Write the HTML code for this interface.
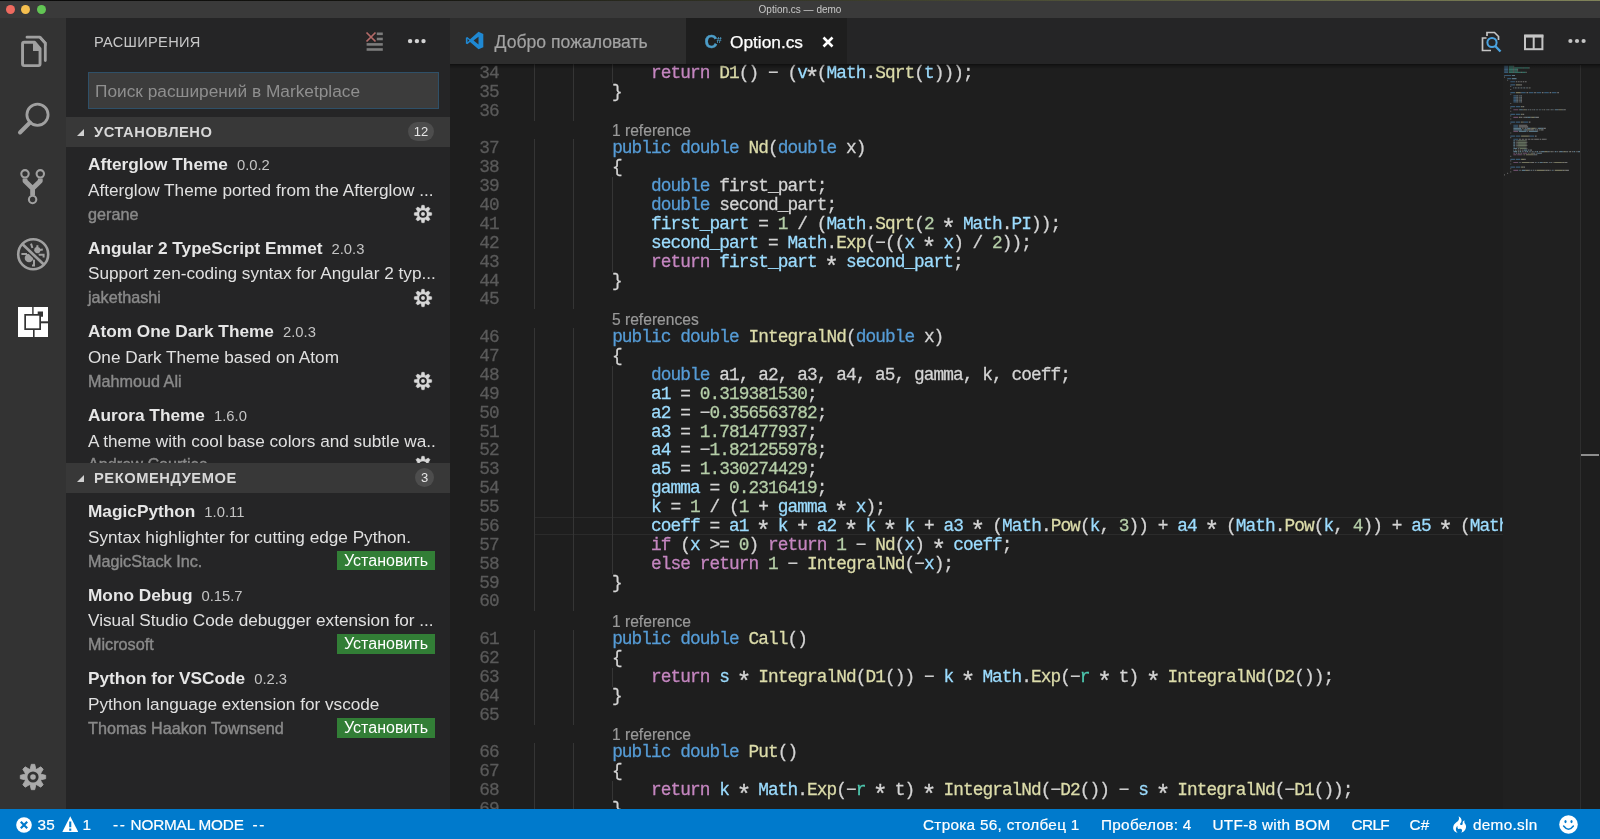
<!DOCTYPE html>
<html><head><meta charset="utf-8"><title>Option.cs — demo</title>
<style>
*{box-sizing:border-box;margin:0;padding:0}
html{background:#1e1e1e;overflow:hidden;width:1600px;height:839px}body{position:relative;will-change:transform;width:1600px;height:839px;overflow:hidden;background:#1e1e1e;font-family:"Liberation Sans",sans-serif;color:#ccc}
.abs{position:absolute}
#title{left:0;top:0;width:1600px;height:18px;background:#3a3a3a}
#title .edge{left:0;top:0;width:1600px;height:1.4px;background:linear-gradient(90deg,#0a0a0a 0,#151510 25%,#3d3f2c 55%,#6a6d4a 85%,#80835a 100%)}
#title .t{left:0;width:1600px;top:3.5px;text-align:center;font-size:10px;color:#c8c8c8;line-height:12px}
.tl{width:9.4px;height:9.4px;border-radius:50%;top:4.7px}
#act{left:0;top:18px;width:66px;height:791px;background:#333333}
#side{left:66px;top:18px;width:384px;height:791px;background:#252526;overflow:hidden}
#tabs{left:450px;top:18px;width:1150px;height:46px;background:#252526}
#editor{left:450px;top:64px;width:1150px;height:745px;background:#1e1e1e;overflow:hidden}
#status{left:0;top:809px;width:1600px;height:30px;background:#007acc;color:#fff;font-size:15.3px;line-height:30px;letter-spacing:.3px;-webkit-text-stroke:.2px}
#status span{position:absolute;top:1px;white-space:pre}
/* sidebar */
.hdr{left:0;width:384px;height:29.5px;background:#383838}
.hdr .lbl{left:28px;top:1.2px;line-height:29px;font-weight:bold;font-size:14.7px;color:#d8d8d8;letter-spacing:.55px}
.hdr .tri{left:10.6px;top:11.6px;width:0;height:0;border-left:7px solid transparent;border-bottom:7px solid #d0d0d0}
.badge{height:19px;border-radius:10px;background:#4d4d4d;color:#e6e6e6;font-size:13px;line-height:19px;text-align:center;top:5px}
.it{left:0;width:384px;height:84px}
.it .n{left:22px;top:4px;font-weight:bold;font-size:17.25px;color:#e6e6e6;line-height:24px;white-space:pre}
.it .n i{font-style:normal;font-weight:normal;font-size:14.8px;color:#c4c4c4;margin-left:9px}
.it .d{left:22px;top:29.9px;width:348px;overflow:hidden;font-size:17.2px;color:#e0e0e0;line-height:24px;white-space:pre}
.it .a{left:22px;top:54.6px;font-size:16.2px;color:#8a8a8a;line-height:22px;white-space:pre;-webkit-text-stroke:.4px}
.btn{left:271px;top:55.8px;width:98px;height:19.6px;background:#327e36;color:#fff;font-size:16px;line-height:19.6px;text-align:center}
/* code */
.ln{left:0;width:48.7px;text-align:right;color:#5a5a5a}
.code,.ln{font-family:"Liberation Mono",monospace;font-size:17.8px;letter-spacing:-0.930px;line-height:18.875px;height:18.875px;white-space:pre;position:absolute;-webkit-text-stroke:0.28px}
.code{left:84.2px;color:#d4d4d4}
.lens{position:absolute;left:162px;font-size:15.6px;color:#999;-webkit-text-stroke:0.2px;line-height:18.875px;white-space:pre}
.k{color:#569cd6}.c{color:#c586c0}.f{color:#dcdcaa}.v{color:#9cdcfe}.n{color:#b5cea8}.g{color:#4ec9b0}
.gd{position:absolute;width:1.5px;background:#353535}
.s{display:inline-block;width:9.752px;letter-spacing:0;font-size:25px;line-height:0;text-align:center;position:relative;top:8.1px;text-indent:-2.4px}
</style></head><body>
<div id="title" class="abs">
 <div class="abs edge"></div>
 <div class="abs tl" style="left:5.6px;background:#ee6a5f"></div>
 <div class="abs tl" style="left:21px;background:#f5bf4f"></div>
 <div class="abs tl" style="left:36.6px;background:#62c554"></div>
 <div class="abs t">Option.cs — demo</div>
</div>
<div id="act" class="abs">
<svg class="abs" style="left:0;top:0" width="66" height="791" viewBox="0 18 66 791" fill="none" stroke="#a0a0a0">
 <!-- files -->
 <path d="M27 37.2 H40 L45.3 43.2 V60.6" stroke-width="2.8" stroke-linejoin="round" stroke-linecap="round"/>
 <path d="M41 36.5 L46.5 42.5 V46 L39.5 38.5 Z" fill="#a0a0a0" stroke="none"/>
 <path d="M22.55 44 Q22.55 42.3 24.2 42.3 H34.6 L40.05 48.6 V64 Q40.05 65.6 38.4 65.6 H24.2 Q22.55 65.6 22.55 64 Z" stroke-width="2.9" stroke-linejoin="round"/>
 <path d="M33 43 V51 H40 V48.6 L34.6 42.5 Z" fill="#a0a0a0" stroke="none"/>
 <!-- search -->
 <circle cx="37.5" cy="114.7" r="10.6" stroke-width="2.8"/>
 <path d="M30 122.5 L20 132.5" stroke-width="4" stroke-linecap="round"/>
 <!-- git -->
 <circle cx="25" cy="173.8" r="3.7" stroke-width="2.1"/>
 <circle cx="40.3" cy="173.8" r="3.7" stroke-width="2.1"/>
 <circle cx="32.6" cy="199.5" r="3.7" stroke-width="2.1"/>
 <path d="M25 178.5 V181 L32.6 188.5 L40.3 181 V178.5 M32.6 188 V195" stroke-width="4.8" stroke-linejoin="round"/>
 <!-- debug -->
 <circle cx="33.2" cy="254.3" r="15" stroke-width="2.6"/>
 <g stroke="none" fill="#a0a0a0">
  <circle cx="29" cy="258" r="4.3"/>
  <circle cx="37.3" cy="250.2" r="3.1"/>
 </g>
 <path d="M31 243.6 L32.4 248 M37.6 245.2 L37 248.4 M39.5 250 L42.8 249.4 M21.4 253.9 H27 M34 259.5 V265.4 H32 M38.6 254.8 H43.6 V257.4" stroke-width="2"/>
 <path d="M24.1 245.7 L42.3 262.9" stroke="#333" stroke-width="5.6"/>
 <path d="M22.8 244.6 L43.8 264.4" stroke-width="2.7"/>
 <!-- gear -->
</svg>
<svg class="abs" style="left:18px;top:289px" width="30" height="30" viewBox="0 0 30 30">
 <rect x="0" y="0" width="30" height="30" fill="#fff"/>
 <rect x="6.3" y="7" width="16.7" height="16" fill="#333"/>
 <rect x="8" y="8.7" width="13.3" height="12.6" fill="#fff"/>
 <rect x="14.2" y="0" width="1.4" height="7" fill="#333"/>
 <rect x="15" y="23" width="1.6" height="7" fill="#333"/>
 <rect x="23" y="14.3" width="7" height="2" fill="#333"/>
 <path d="M19.7 4.6 H25 V9.8 H23 V7 H19.7 Z" fill="#333"/>
</svg>
<svg class="abs" style="left:19px;top:744.5px" width="28" height="28" viewBox="-14 -14 28 28"><g fill="#aaa" stroke="#aaa" stroke-width=".8" stroke-linejoin="round"><circle r="7.8"/><g transform="rotate(0)"><path d="M-3.1 -7 L-1.7 -12.7 H1.7 L3.1 -7 Z"/></g><g transform="rotate(45)"><path d="M-3.1 -7 L-1.7 -12.7 H1.7 L3.1 -7 Z"/></g><g transform="rotate(90)"><path d="M-3.1 -7 L-1.7 -12.7 H1.7 L3.1 -7 Z"/></g><g transform="rotate(135)"><path d="M-3.1 -7 L-1.7 -12.7 H1.7 L3.1 -7 Z"/></g><g transform="rotate(180)"><path d="M-3.1 -7 L-1.7 -12.7 H1.7 L3.1 -7 Z"/></g><g transform="rotate(225)"><path d="M-3.1 -7 L-1.7 -12.7 H1.7 L3.1 -7 Z"/></g><g transform="rotate(270)"><path d="M-3.1 -7 L-1.7 -12.7 H1.7 L3.1 -7 Z"/></g><g transform="rotate(315)"><path d="M-3.1 -7 L-1.7 -12.7 H1.7 L3.1 -7 Z"/></g></g><circle r="4.2" fill="none" stroke="#333" stroke-width="2.8"/></svg>
</div>
<div id="side" class="abs"><div class="abs" style="left:28px;top:15px;font-size:14.6px;line-height:18px;color:#c8c8c8;letter-spacing:.3px">РАСШИРЕНИЯ</div>
<svg class="abs" style="left:298px;top:12px" width="22" height="24" viewBox="364 30 22 24">
     <g fill="#7c7c7c"><rect x="376.8" y="32.5" width="6" height="2.6"/><rect x="376.8" y="37.7" width="6" height="2.6"/><rect x="366.6" y="43.1" width="16.2" height="2.6"/><rect x="366.6" y="48.2" width="16.2" height="2.6"/></g>
     <path d="M366.5 32.5 L375.5 41.5 M375.5 32.5 L366.5 41.5" stroke="#b36a68" stroke-width="1.7"/></svg>
<svg class="abs" style="left:340px;top:19px" width="22" height="8"><g fill="#d4d4d4"><circle cx="4.1" cy="4.1" r="2.2"/><circle cx="10.9" cy="4.1" r="2.2"/><circle cx="17.5" cy="4.1" r="2.2"/></g></svg>
<div class="abs" style="left:22px;top:54px;width:351px;height:37px;background:#3c3c3c;border:1px solid #2f5068"><div class="abs" style="left:6px;top:0;line-height:36px;font-size:17.3px;color:#8f8f8f;white-space:pre">Поиск расширений в Marketplace</div></div>
<div class="abs hdr" style="top:99px"><div class="abs tri"></div><div class="abs lbl">УСТАНОВЛЕНО</div><div class="abs badge" style="left:342px;width:26px">12</div></div>
<div class="abs" style="left:0;top:128px;width:384px;height:317px;overflow:hidden">
<div class="abs it" style="top:2.0px"><div class="abs n">Afterglow Theme<i>0.0.2</i></div><div class="abs d">Afterglow Theme ported from the Afterglow ...</div><div class="abs a">gerane</div><svg class="abs" style="left:347px;top:56px" width="20" height="20" viewBox="-10 -10 20 20"><g fill="#d8d8d8" stroke="#d8d8d8" stroke-width=".5" stroke-linejoin="round"><circle r="5.3"/><g transform="rotate(0)"><path d="M-2.1 -4.8 L-1.2 -8.7 H1.2 L2.1 -4.8 Z"/></g><g transform="rotate(45)"><path d="M-2.1 -4.8 L-1.2 -8.7 H1.2 L2.1 -4.8 Z"/></g><g transform="rotate(90)"><path d="M-2.1 -4.8 L-1.2 -8.7 H1.2 L2.1 -4.8 Z"/></g><g transform="rotate(135)"><path d="M-2.1 -4.8 L-1.2 -8.7 H1.2 L2.1 -4.8 Z"/></g><g transform="rotate(180)"><path d="M-2.1 -4.8 L-1.2 -8.7 H1.2 L2.1 -4.8 Z"/></g><g transform="rotate(225)"><path d="M-2.1 -4.8 L-1.2 -8.7 H1.2 L2.1 -4.8 Z"/></g><g transform="rotate(270)"><path d="M-2.1 -4.8 L-1.2 -8.7 H1.2 L2.1 -4.8 Z"/></g><g transform="rotate(315)"><path d="M-2.1 -4.8 L-1.2 -8.7 H1.2 L2.1 -4.8 Z"/></g></g><circle r="2.9" fill="none" stroke="#252526" stroke-width="1.9"/></svg></div>
<div class="abs it" style="top:85.6px"><div class="abs n">Angular 2 TypeScript Emmet<i>2.0.3</i></div><div class="abs d">Support zen-coding syntax for Angular 2 typ...</div><div class="abs a">jakethashi</div><svg class="abs" style="left:347px;top:56px" width="20" height="20" viewBox="-10 -10 20 20"><g fill="#d8d8d8" stroke="#d8d8d8" stroke-width=".5" stroke-linejoin="round"><circle r="5.3"/><g transform="rotate(0)"><path d="M-2.1 -4.8 L-1.2 -8.7 H1.2 L2.1 -4.8 Z"/></g><g transform="rotate(45)"><path d="M-2.1 -4.8 L-1.2 -8.7 H1.2 L2.1 -4.8 Z"/></g><g transform="rotate(90)"><path d="M-2.1 -4.8 L-1.2 -8.7 H1.2 L2.1 -4.8 Z"/></g><g transform="rotate(135)"><path d="M-2.1 -4.8 L-1.2 -8.7 H1.2 L2.1 -4.8 Z"/></g><g transform="rotate(180)"><path d="M-2.1 -4.8 L-1.2 -8.7 H1.2 L2.1 -4.8 Z"/></g><g transform="rotate(225)"><path d="M-2.1 -4.8 L-1.2 -8.7 H1.2 L2.1 -4.8 Z"/></g><g transform="rotate(270)"><path d="M-2.1 -4.8 L-1.2 -8.7 H1.2 L2.1 -4.8 Z"/></g><g transform="rotate(315)"><path d="M-2.1 -4.8 L-1.2 -8.7 H1.2 L2.1 -4.8 Z"/></g></g><circle r="2.9" fill="none" stroke="#252526" stroke-width="1.9"/></svg></div>
<div class="abs it" style="top:169.2px"><div class="abs n">Atom One Dark Theme<i>2.0.3</i></div><div class="abs d">One Dark Theme based on Atom</div><div class="abs a">Mahmoud Ali</div><svg class="abs" style="left:347px;top:56px" width="20" height="20" viewBox="-10 -10 20 20"><g fill="#d8d8d8" stroke="#d8d8d8" stroke-width=".5" stroke-linejoin="round"><circle r="5.3"/><g transform="rotate(0)"><path d="M-2.1 -4.8 L-1.2 -8.7 H1.2 L2.1 -4.8 Z"/></g><g transform="rotate(45)"><path d="M-2.1 -4.8 L-1.2 -8.7 H1.2 L2.1 -4.8 Z"/></g><g transform="rotate(90)"><path d="M-2.1 -4.8 L-1.2 -8.7 H1.2 L2.1 -4.8 Z"/></g><g transform="rotate(135)"><path d="M-2.1 -4.8 L-1.2 -8.7 H1.2 L2.1 -4.8 Z"/></g><g transform="rotate(180)"><path d="M-2.1 -4.8 L-1.2 -8.7 H1.2 L2.1 -4.8 Z"/></g><g transform="rotate(225)"><path d="M-2.1 -4.8 L-1.2 -8.7 H1.2 L2.1 -4.8 Z"/></g><g transform="rotate(270)"><path d="M-2.1 -4.8 L-1.2 -8.7 H1.2 L2.1 -4.8 Z"/></g><g transform="rotate(315)"><path d="M-2.1 -4.8 L-1.2 -8.7 H1.2 L2.1 -4.8 Z"/></g></g><circle r="2.9" fill="none" stroke="#252526" stroke-width="1.9"/></svg></div>
<div class="abs it" style="top:252.8px"><div class="abs n">Aurora Theme<i>1.6.0</i></div><div class="abs d">A theme with cool base colors and subtle wa...</div><div class="abs a">Andrew Courtice</div><svg class="abs" style="left:347px;top:56px" width="20" height="20" viewBox="-10 -10 20 20"><g fill="#d8d8d8" stroke="#d8d8d8" stroke-width=".5" stroke-linejoin="round"><circle r="5.3"/><g transform="rotate(0)"><path d="M-2.1 -4.8 L-1.2 -8.7 H1.2 L2.1 -4.8 Z"/></g><g transform="rotate(45)"><path d="M-2.1 -4.8 L-1.2 -8.7 H1.2 L2.1 -4.8 Z"/></g><g transform="rotate(90)"><path d="M-2.1 -4.8 L-1.2 -8.7 H1.2 L2.1 -4.8 Z"/></g><g transform="rotate(135)"><path d="M-2.1 -4.8 L-1.2 -8.7 H1.2 L2.1 -4.8 Z"/></g><g transform="rotate(180)"><path d="M-2.1 -4.8 L-1.2 -8.7 H1.2 L2.1 -4.8 Z"/></g><g transform="rotate(225)"><path d="M-2.1 -4.8 L-1.2 -8.7 H1.2 L2.1 -4.8 Z"/></g><g transform="rotate(270)"><path d="M-2.1 -4.8 L-1.2 -8.7 H1.2 L2.1 -4.8 Z"/></g><g transform="rotate(315)"><path d="M-2.1 -4.8 L-1.2 -8.7 H1.2 L2.1 -4.8 Z"/></g></g><circle r="2.9" fill="none" stroke="#252526" stroke-width="1.9"/></svg></div>
</div>
<div class="abs hdr" style="top:445px"><div class="abs tri"></div><div class="abs lbl">РЕКОМЕНДУЕМОЕ</div><div class="abs badge" style="left:349px;width:19px">3</div></div>
<div class="abs it" style="top:477.0px"><div class="abs n">MagicPython<i>1.0.11</i></div><div class="abs d">Syntax highlighter for cutting edge Python.</div><div class="abs a">MagicStack Inc.</div><div class="abs btn">Установить</div></div>
<div class="abs it" style="top:560.6px"><div class="abs n">Mono Debug<i>0.15.7</i></div><div class="abs d">Visual Studio Code debugger extension for ...</div><div class="abs a">Microsoft</div><div class="abs btn">Установить</div></div>
<div class="abs it" style="top:644.2px"><div class="abs n">Python for VSCode<i>0.2.3</i></div><div class="abs d">Python language extension for vscode</div><div class="abs a">Thomas Haakon Townsend</div><div class="abs btn">Установить</div></div></div>
<div id="tabs" class="abs">
<div class="abs" style="left:0;top:0;width:236px;height:46px;background:#2d2d2d"></div>
<div class="abs" style="left:236px;top:0;width:161px;height:46px;background:#1e1e1e"></div>
<svg class="abs" style="left:15.4px;top:12.6px" width="19.2" height="19.2" viewBox="0 0 22 22"><path d="M15.5 1 L21 3.4 V18.6 L15.5 21 L5.8 12.6 L2.6 15.2 L1 14.2 V7.8 L2.6 6.8 L5.8 9.4 Z M15.5 6.6 L9.8 11 L15.5 15.4 Z M2.9 9 V13 L5 11 Z" fill="#1f88d2" fill-rule="evenodd"/></svg>
<div class="abs" style="left:44.6px;top:0.6px;line-height:47px;font-size:17.6px;color:#a3a3a3;-webkit-text-stroke:.2px;white-space:pre">Добро пожаловать</div>
<div class="abs" style="left:254.6px;top:0.5px;line-height:46px;font-size:18px;font-weight:bold;color:#4d9dc8;letter-spacing:-1.5px;-webkit-text-stroke:.3px">C<span style="font-size:9.5px;position:relative;top:-5px;left:0.5px;-webkit-text-stroke:0">#</span></div>
<div class="abs" style="left:280px;top:0.6px;line-height:47px;font-size:17.3px;color:#fff;-webkit-text-stroke:.25px;white-space:pre">Option.cs</div>
<svg class="abs" style="left:372px;top:18px" width="12" height="12"><path d="M1.5 1.5 L10.5 10.5 M10.5 1.5 L1.5 10.5" stroke="#fff" stroke-width="2.6"/></svg>
<!-- right icons -->
<svg class="abs" style="left:1029px;top:11px" width="26" height="26" viewBox="0 0 26 26" fill="none">
 <path d="M8 7 V3.5 H15.5 L19.5 7.5 V11" stroke="#c5c5c5" stroke-width="1.7"/>
 <path d="M7.5 9 H3.5 V21.5 H12" stroke="#c5c5c5" stroke-width="1.7"/>
 <circle cx="13" cy="13.5" r="4.6" stroke="#4aa3e0" stroke-width="2"/>
 <path d="M16.2 17 L21.5 22.5" stroke="#4aa3e0" stroke-width="2.4"/>
</svg>
<svg class="abs" style="left:1073.5px;top:15.6px" width="20" height="18" fill="none"><rect x="1" y="2" width="17.4" height="13.2" stroke="#c5c5c5" stroke-width="2"/><path d="M0 2 H19.4" stroke="#c5c5c5" stroke-width="3.2"/><path d="M9.7 2 V16" stroke="#c5c5c5" stroke-width="2"/></svg>
<svg class="abs" style="left:1116px;top:19px" width="22" height="8"><g fill="#c5c5c5"><circle cx="4.4" cy="4" r="2.1"/><circle cx="11" cy="4" r="2.1"/><circle cx="17.6" cy="4" r="2.1"/></g></svg>
</div>
<div id="editor" class="abs"><div class="abs" style="left:0;top:1px;width:1150px;height:744px"><div class="ln" style="top:-1.05px">34</div>
<div class="code" style="top:-1.05px">            <span class="c">return</span> <span class="f">D1</span>() − (<span class="v">v</span><span class="s">*</span>(<span class="v">Math</span>.<span class="f">Sqrt</span>(<span class="v">t</span>)));</div>
<div class="ln" style="top:17.82px">35</div>
<div class="code" style="top:17.82px">        }</div>
<div class="ln" style="top:36.70px">36</div>
<div class="lens" style="top:56.78px">1 reference</div>
<div class="ln" style="top:74.45px">37</div>
<div class="code" style="top:74.45px">        <span class="k">public</span> <span class="k">double</span> <span class="f">Nd</span>(<span class="k">double</span> x)</div>
<div class="ln" style="top:93.33px">38</div>
<div class="code" style="top:93.33px">        {</div>
<div class="ln" style="top:112.20px">39</div>
<div class="code" style="top:112.20px">            <span class="k">double</span> first_part;</div>
<div class="ln" style="top:131.07px">40</div>
<div class="code" style="top:131.07px">            <span class="k">double</span> second_part;</div>
<div class="ln" style="top:149.95px">41</div>
<div class="code" style="top:149.95px">            <span class="v">first_part</span> = <span class="n">1</span> / (<span class="v">Math</span>.<span class="f">Sqrt</span>(<span class="n">2</span> <span class="s">*</span> <span class="v">Math</span>.<span class="v">PI</span>));</div>
<div class="ln" style="top:168.82px">42</div>
<div class="code" style="top:168.82px">            <span class="v">second_part</span> = <span class="v">Math</span>.<span class="f">Exp</span>(−((<span class="v">x</span> <span class="s">*</span> <span class="v">x</span>) / <span class="n">2</span>));</div>
<div class="ln" style="top:187.70px">43</div>
<div class="code" style="top:187.70px">            <span class="c">return</span> <span class="v">first_part</span> <span class="s">*</span> <span class="v">second_part</span>;</div>
<div class="ln" style="top:206.57px">44</div>
<div class="code" style="top:206.57px">        }</div>
<div class="ln" style="top:225.45px">45</div>
<div class="lens" style="top:245.52px">5 references</div>
<div class="ln" style="top:263.20px">46</div>
<div class="code" style="top:263.20px">        <span class="k">public</span> <span class="k">double</span> <span class="f">IntegralNd</span>(<span class="k">double</span> x)</div>
<div class="ln" style="top:282.07px">47</div>
<div class="code" style="top:282.07px">        {</div>
<div class="ln" style="top:300.95px">48</div>
<div class="code" style="top:300.95px">            <span class="k">double</span> a1, a2, a3, a4, a5, gamma, k, coeff;</div>
<div class="ln" style="top:319.82px">49</div>
<div class="code" style="top:319.82px">            <span class="v">a1</span> = <span class="n">0.319381530</span>;</div>
<div class="ln" style="top:338.70px">50</div>
<div class="code" style="top:338.70px">            <span class="v">a2</span> = −<span class="n">0.356563782</span>;</div>
<div class="ln" style="top:357.57px">51</div>
<div class="code" style="top:357.57px">            <span class="v">a3</span> = <span class="n">1.781477937</span>;</div>
<div class="ln" style="top:376.45px">52</div>
<div class="code" style="top:376.45px">            <span class="v">a4</span> = −<span class="n">1.821255978</span>;</div>
<div class="ln" style="top:395.32px">53</div>
<div class="code" style="top:395.32px">            <span class="v">a5</span> = <span class="n">1.330274429</span>;</div>
<div class="ln" style="top:414.20px">54</div>
<div class="code" style="top:414.20px">            <span class="v">gamma</span> = <span class="n">0.2316419</span>;</div>
<div class="ln" style="top:433.07px">55</div>
<div class="code" style="top:433.07px">            <span class="v">k</span> = <span class="n">1</span> / (<span class="n">1</span> + <span class="v">gamma</span> <span class="s">*</span> <span class="v">x</span>);</div>
<div class="ln" style="top:451.95px">56</div>
<div class="abs" style="left:83.6px;top:451.55px;width:969.4px;height:18.2px;border:1.6px solid #2b2b2b;border-right:0"></div>
<div class="code" style="top:451.95px">            <span class="v">coeff</span> = <span class="v">a1</span> <span class="s">*</span> <span class="v">k</span> + <span class="v">a2</span> <span class="s">*</span> <span class="v">k</span> <span class="s">*</span> <span class="v">k</span> + <span class="v">a3</span> <span class="s">*</span> (<span class="v">Math</span>.<span class="f">Pow</span>(<span class="v">k</span>, <span class="n">3</span>)) + <span class="v">a4</span> <span class="s">*</span> (<span class="v">Math</span>.<span class="f">Pow</span>(<span class="v">k</span>, <span class="n">4</span>)) + <span class="v">a5</span> <span class="s">*</span> (<span class="v">Math</span>.<span class="f">Pow</span>(<span class="v">k</span>, <span class="n">5</span>));</div>
<div class="ln" style="top:470.82px">57</div>
<div class="code" style="top:470.82px">            <span class="c">if</span> (<span class="v">x</span> &gt;= <span class="n">0</span>) <span class="c">return</span> <span class="n">1</span> − <span class="f">Nd</span>(<span class="v">x</span>) <span class="s">*</span> <span class="v">coeff</span>;</div>
<div class="ln" style="top:489.70px">58</div>
<div class="code" style="top:489.70px">            <span class="c">else</span> <span class="c">return</span> <span class="n">1</span> − <span class="f">IntegralNd</span>(−<span class="v">x</span>);</div>
<div class="ln" style="top:508.57px">59</div>
<div class="code" style="top:508.57px">        }</div>
<div class="ln" style="top:527.45px">60</div>
<div class="lens" style="top:547.53px">1 reference</div>
<div class="ln" style="top:565.20px">61</div>
<div class="code" style="top:565.20px">        <span class="k">public</span> <span class="k">double</span> <span class="f">Call</span>()</div>
<div class="ln" style="top:584.08px">62</div>
<div class="code" style="top:584.08px">        {</div>
<div class="ln" style="top:602.95px">63</div>
<div class="code" style="top:602.95px">            <span class="c">return</span> <span class="v">s</span> <span class="s">*</span> <span class="f">IntegralNd</span>(<span class="f">D1</span>()) − <span class="v">k</span> <span class="s">*</span> <span class="v">Math</span>.<span class="f">Exp</span>(−<span class="g">r</span> <span class="s">*</span> t) <span class="s">*</span> <span class="f">IntegralNd</span>(<span class="f">D2</span>());</div>
<div class="ln" style="top:621.83px">64</div>
<div class="code" style="top:621.83px">        }</div>
<div class="ln" style="top:640.70px">65</div>
<div class="lens" style="top:660.78px">1 reference</div>
<div class="ln" style="top:678.45px">66</div>
<div class="code" style="top:678.45px">        <span class="k">public</span> <span class="k">double</span> <span class="f">Put</span>()</div>
<div class="ln" style="top:697.33px">67</div>
<div class="code" style="top:697.33px">        {</div>
<div class="ln" style="top:716.20px">68</div>
<div class="code" style="top:716.20px">            <span class="c">return</span> <span class="v">k</span> <span class="s">*</span> <span class="v">Math</span>.<span class="f">Exp</span>(−<span class="g">r</span> <span class="s">*</span> t) <span class="s">*</span> <span class="f">IntegralNd</span>(−<span class="f">D2</span>()) − <span class="v">s</span> <span class="s">*</span> <span class="f">IntegralNd</span>(−<span class="f">D1</span>());</div>
<div class="ln" style="top:735.08px">69</div>
<div class="code" style="top:735.08px">        }</div>
<div class="gd" style="left:83.6px;top:-1.05px;height:18.88px"></div>
<div class="gd" style="left:122.6px;top:-1.05px;height:18.88px"></div>
<div class="gd" style="left:161.6px;top:-1.05px;height:18.88px"></div>
<div class="gd" style="left:83.6px;top:17.82px;height:18.88px"></div>
<div class="gd" style="left:122.6px;top:17.82px;height:18.88px"></div>
<div class="gd" style="left:83.6px;top:36.70px;height:18.88px"></div>
<div class="gd" style="left:122.6px;top:36.70px;height:18.88px"></div>
<div class="gd" style="left:83.6px;top:74.45px;height:18.88px"></div>
<div class="gd" style="left:122.6px;top:74.45px;height:18.88px"></div>
<div class="gd" style="left:83.6px;top:93.33px;height:18.88px"></div>
<div class="gd" style="left:122.6px;top:93.33px;height:18.88px"></div>
<div class="gd" style="left:83.6px;top:112.20px;height:18.88px"></div>
<div class="gd" style="left:122.6px;top:112.20px;height:18.88px"></div>
<div class="gd" style="left:161.6px;top:112.20px;height:18.88px"></div>
<div class="gd" style="left:83.6px;top:131.07px;height:18.88px"></div>
<div class="gd" style="left:122.6px;top:131.07px;height:18.88px"></div>
<div class="gd" style="left:161.6px;top:131.07px;height:18.88px"></div>
<div class="gd" style="left:83.6px;top:149.95px;height:18.88px"></div>
<div class="gd" style="left:122.6px;top:149.95px;height:18.88px"></div>
<div class="gd" style="left:161.6px;top:149.95px;height:18.88px"></div>
<div class="gd" style="left:83.6px;top:168.82px;height:18.88px"></div>
<div class="gd" style="left:122.6px;top:168.82px;height:18.88px"></div>
<div class="gd" style="left:161.6px;top:168.82px;height:18.88px"></div>
<div class="gd" style="left:83.6px;top:187.70px;height:18.88px"></div>
<div class="gd" style="left:122.6px;top:187.70px;height:18.88px"></div>
<div class="gd" style="left:161.6px;top:187.70px;height:18.88px"></div>
<div class="gd" style="left:83.6px;top:206.57px;height:18.88px"></div>
<div class="gd" style="left:122.6px;top:206.57px;height:18.88px"></div>
<div class="gd" style="left:83.6px;top:225.45px;height:18.88px"></div>
<div class="gd" style="left:122.6px;top:225.45px;height:18.88px"></div>
<div class="gd" style="left:83.6px;top:263.20px;height:18.88px"></div>
<div class="gd" style="left:122.6px;top:263.20px;height:18.88px"></div>
<div class="gd" style="left:83.6px;top:282.07px;height:18.88px"></div>
<div class="gd" style="left:122.6px;top:282.07px;height:18.88px"></div>
<div class="gd" style="left:83.6px;top:300.95px;height:18.88px"></div>
<div class="gd" style="left:122.6px;top:300.95px;height:18.88px"></div>
<div class="gd" style="left:161.6px;top:300.95px;height:18.88px"></div>
<div class="gd" style="left:83.6px;top:319.82px;height:18.88px"></div>
<div class="gd" style="left:122.6px;top:319.82px;height:18.88px"></div>
<div class="gd" style="left:161.6px;top:319.82px;height:18.88px"></div>
<div class="gd" style="left:83.6px;top:338.70px;height:18.88px"></div>
<div class="gd" style="left:122.6px;top:338.70px;height:18.88px"></div>
<div class="gd" style="left:161.6px;top:338.70px;height:18.88px"></div>
<div class="gd" style="left:83.6px;top:357.57px;height:18.88px"></div>
<div class="gd" style="left:122.6px;top:357.57px;height:18.88px"></div>
<div class="gd" style="left:161.6px;top:357.57px;height:18.88px"></div>
<div class="gd" style="left:83.6px;top:376.45px;height:18.88px"></div>
<div class="gd" style="left:122.6px;top:376.45px;height:18.88px"></div>
<div class="gd" style="left:161.6px;top:376.45px;height:18.88px"></div>
<div class="gd" style="left:83.6px;top:395.32px;height:18.88px"></div>
<div class="gd" style="left:122.6px;top:395.32px;height:18.88px"></div>
<div class="gd" style="left:161.6px;top:395.32px;height:18.88px"></div>
<div class="gd" style="left:83.6px;top:414.20px;height:18.88px"></div>
<div class="gd" style="left:122.6px;top:414.20px;height:18.88px"></div>
<div class="gd" style="left:161.6px;top:414.20px;height:18.88px"></div>
<div class="gd" style="left:83.6px;top:433.07px;height:18.88px"></div>
<div class="gd" style="left:122.6px;top:433.07px;height:18.88px"></div>
<div class="gd" style="left:161.6px;top:433.07px;height:18.88px"></div>
<div class="gd" style="left:83.6px;top:451.95px;height:18.88px"></div>
<div class="gd" style="left:122.6px;top:451.95px;height:18.88px"></div>
<div class="gd" style="left:161.6px;top:451.95px;height:18.88px"></div>
<div class="gd" style="left:83.6px;top:470.82px;height:18.88px"></div>
<div class="gd" style="left:122.6px;top:470.82px;height:18.88px"></div>
<div class="gd" style="left:161.6px;top:470.82px;height:18.88px"></div>
<div class="gd" style="left:83.6px;top:489.70px;height:18.88px"></div>
<div class="gd" style="left:122.6px;top:489.70px;height:18.88px"></div>
<div class="gd" style="left:161.6px;top:489.70px;height:18.88px"></div>
<div class="gd" style="left:83.6px;top:508.57px;height:18.88px"></div>
<div class="gd" style="left:122.6px;top:508.57px;height:18.88px"></div>
<div class="gd" style="left:83.6px;top:527.45px;height:18.88px"></div>
<div class="gd" style="left:122.6px;top:527.45px;height:18.88px"></div>
<div class="gd" style="left:83.6px;top:565.20px;height:18.88px"></div>
<div class="gd" style="left:122.6px;top:565.20px;height:18.88px"></div>
<div class="gd" style="left:83.6px;top:584.08px;height:18.88px"></div>
<div class="gd" style="left:122.6px;top:584.08px;height:18.88px"></div>
<div class="gd" style="left:83.6px;top:602.95px;height:18.88px"></div>
<div class="gd" style="left:122.6px;top:602.95px;height:18.88px"></div>
<div class="gd" style="left:161.6px;top:602.95px;height:18.88px"></div>
<div class="gd" style="left:83.6px;top:621.83px;height:18.88px"></div>
<div class="gd" style="left:122.6px;top:621.83px;height:18.88px"></div>
<div class="gd" style="left:83.6px;top:640.70px;height:18.88px"></div>
<div class="gd" style="left:122.6px;top:640.70px;height:18.88px"></div>
<div class="gd" style="left:83.6px;top:678.45px;height:18.88px"></div>
<div class="gd" style="left:122.6px;top:678.45px;height:18.88px"></div>
<div class="gd" style="left:83.6px;top:697.33px;height:18.88px"></div>
<div class="gd" style="left:122.6px;top:697.33px;height:18.88px"></div>
<div class="gd" style="left:83.6px;top:716.20px;height:18.88px"></div>
<div class="gd" style="left:122.6px;top:716.20px;height:18.88px"></div>
<div class="gd" style="left:161.6px;top:716.20px;height:18.88px"></div>
<div class="gd" style="left:83.6px;top:735.08px;height:18.88px"></div>
<div class="gd" style="left:122.6px;top:735.08px;height:18.88px"></div>
<div class="abs" style="left:1053px;top:0;width:78px;height:744px;background:#202020"></div>
<svg class="abs" style="left:1053px;top:0" width="78" height="120" fill="none" stroke-width="1.15" opacity=".45"><path stroke="#569cd6" d="M1.2 1.2h3.8M1.2 2.8h3.8M1.2 4.3h3.8M1.2 5.9h3.8M1.2 7.4h3.8M1.2 10.5h6.9M4.3 13.6h3.9M7.4 16.7h4.6M7.4 19.8h4.6M7.4 27.6h4.6M18.1 27.6h4.6M25.8 27.6h4.6M33.5 27.6h4.6M41.2 27.6h4.6M48.9 27.6h4.6M10.4 30.7h3.1M10.4 32.3h3.1M10.4 33.8h3.1M10.4 35.4h3.1M10.4 36.9h3.1M7.4 41.6h4.6M12.8 41.6h4.6M7.4 49.3h4.6M12.8 49.3h4.6M7.4 57.1h4.6M12.8 57.1h4.6M20.5 57.1h4.6M10.4 60.2h4.6M10.4 61.8h4.6M7.4 71.1h4.6M12.8 71.1h4.6M26.6 71.1h4.6M10.4 74.2h4.6M7.4 94.4h4.6M12.8 94.4h4.6M7.4 102.1h4.6M12.8 102.1h4.6"/><path stroke="#c586c0" d="M10.4 44.7h4.6M10.4 52.4h4.6M10.4 66.4h4.6M10.4 88.2h1.5M19.7 88.2h4.6M10.4 89.7h3.1M14.3 89.7h4.6M10.4 97.5h4.6M10.4 105.3h4.6"/><path stroke="#dcdcaa" d="M12.8 19.8h4.6M12.8 27.6h4.6M18.1 41.6h1.5M20.5 44.7h2.3M55.9 44.7h3.1M18.1 49.3h1.5M15.8 52.4h1.5M28.2 52.4h3.1M18.1 57.1h1.5M28.2 63.3h3.1M25.1 64.9h2.3M18.1 71.1h7.7M42.0 86.6h2.3M60.5 86.6h2.3M28.2 88.2h1.5M22.8 89.7h7.7M18.1 94.4h3.1M18.9 97.5h7.7M27.4 97.5h1.5M40.5 97.5h2.3M51.2 97.5h7.7M59.7 97.5h1.5M18.1 102.1h2.3M22.8 105.3h2.3M33.5 105.3h7.7M42.8 105.3h1.5M52.0 105.3h7.7M61.3 105.3h1.5"/><path stroke="#9cdcfe" d="M8.9 10.5h3.1M8.9 13.6h4.6M10.4 22.9h0.8M13.5 22.9h0.8M16.6 22.9h0.8M19.7 22.9h0.8M22.8 22.9h0.8M14.3 30.7h0.8M17.4 30.7h0.8M14.3 32.3h0.8M17.4 32.3h0.8M14.3 33.8h0.8M17.4 33.8h0.8M14.3 35.4h0.8M17.4 35.4h0.8M14.3 36.9h0.8M17.4 36.9h0.8M16.6 44.7h3.1M23.5 44.7h0.8M26.6 44.7h0.8M31.2 44.7h0.8M34.3 44.7h0.8M37.4 44.7h0.8M44.3 44.7h0.8M48.9 44.7h0.8M52.0 44.7h3.1M59.7 44.7h0.8M22.0 52.4h0.8M24.3 52.4h3.1M32.0 52.4h0.8M10.4 63.3h7.7M24.3 63.3h3.1M35.1 63.3h3.1M38.9 63.3h1.5M10.4 64.9h8.5M21.2 64.9h3.1M30.5 64.9h0.8M33.5 64.9h0.8M15.8 66.4h7.7M25.8 66.4h8.5M10.4 75.7h1.5M10.4 77.3h1.5M10.4 78.8h1.5M10.4 80.4h1.5M10.4 82.0h1.5M10.4 83.5h3.8M10.4 85.1h0.8M20.5 85.1h3.8M26.6 85.1h0.8M10.4 86.6h3.8M16.6 86.6h1.5M20.5 86.6h0.8M23.5 86.6h1.5M27.4 86.6h0.8M30.5 86.6h0.8M33.5 86.6h1.5M38.2 86.6h3.1M45.1 86.6h0.8M52.0 86.6h1.5M56.6 86.6h3.1M63.6 86.6h0.8M70.5 86.6h1.5M75.1 86.6h1.9M13.5 88.2h0.8M30.5 88.2h0.8M34.3 88.2h3.9M32.0 89.7h0.8M15.8 97.5h0.8M33.5 97.5h0.8M36.6 97.5h3.1M44.3 97.5h0.8M47.4 97.5h0.8M15.8 105.3h0.8M18.9 105.3h3.1M26.6 105.3h0.8M29.7 105.3h0.8M48.9 105.3h0.8"/><path stroke="#b5cea8" d="M25.8 22.9h0.8M40.5 44.7h0.8M20.5 63.3h0.8M32.0 63.3h0.8M37.4 64.9h0.8M14.3 75.7h8.5M15.1 77.3h8.5M14.3 78.8h8.5M15.1 80.4h8.5M14.3 82.0h8.5M16.6 83.5h6.9M13.5 85.1h0.8M17.4 85.1h0.8M47.4 86.6h0.8M65.9 86.6h0.8M17.4 88.2h0.8M25.1 88.2h0.8M19.7 89.7h0.8"/><path stroke="#4ec9b0" d="M5.8 1.2h4.6M5.8 2.8h4.6M11.2 2.8h8.5M20.5 2.8h5.4M5.8 4.3h4.6M11.2 4.3h3.1M5.8 5.9h4.6M11.2 5.9h3.1M5.8 7.4h4.6M11.2 7.4h6.9M18.9 7.4h3.8"/><path stroke="#d4d4d4" d="M10.4 1.2h0.8M10.4 2.8h0.8M19.7 2.8h0.8M25.8 2.8h0.8M10.4 4.3h0.8M14.3 4.3h0.8M10.4 5.9h0.8M14.3 5.9h0.8M10.4 7.4h0.8M18.1 7.4h0.8M22.8 7.4h0.8M1.2 12.1h0.8M4.3 15.2h0.8M12.8 16.7h0.8M13.5 16.7h0.8M15.1 16.7h0.8M15.8 16.7h0.8M17.4 16.7h0.8M18.1 16.7h0.8M19.7 16.7h0.8M20.5 16.7h0.8M22.0 16.7h0.8M22.8 16.7h0.8M17.4 19.8h1.5M7.4 21.4h0.8M12.0 22.9h0.8M15.1 22.9h0.8M18.1 22.9h0.8M21.2 22.9h0.8M24.3 22.9h0.8M26.6 22.9h0.8M7.4 24.5h0.8M17.4 27.6h0.8M23.5 27.6h0.8M24.3 27.6h0.8M31.2 27.6h0.8M32.0 27.6h0.8M38.9 27.6h0.8M39.7 27.6h0.8M46.6 27.6h0.8M47.4 27.6h0.8M54.3 27.6h0.8M55.1 27.6h0.8M7.4 29.2h0.8M13.5 30.7h0.8M15.8 30.7h0.8M18.1 30.7h0.8M13.5 32.3h0.8M15.8 32.3h0.8M18.1 32.3h0.8M13.5 33.8h0.8M15.8 33.8h0.8M18.1 33.8h0.8M13.5 35.4h0.8M15.8 35.4h0.8M18.1 35.4h0.8M13.5 36.9h0.8M15.8 36.9h0.8M18.1 36.9h0.8M7.4 38.5h0.8M19.7 41.6h1.5M7.4 43.1h0.8M15.8 44.7h0.8M19.7 44.7h0.8M22.8 44.7h0.8M25.1 44.7h0.8M27.4 44.7h0.8M28.9 44.7h0.8M30.5 44.7h0.8M32.8 44.7h0.8M35.9 44.7h0.8M38.9 44.7h0.8M41.2 44.7h0.8M42.8 44.7h0.8M45.1 44.7h0.8M46.6 44.7h0.8M48.2 44.7h0.8M50.5 44.7h0.8M55.1 44.7h0.8M59.0 44.7h0.8M60.5 44.7h2.3M7.4 46.2h0.8M19.7 49.3h1.5M7.4 50.9h0.8M17.4 52.4h1.5M19.7 52.4h0.8M21.2 52.4h0.8M22.8 52.4h1.5M27.4 52.4h0.8M31.2 52.4h0.8M32.8 52.4h3.1M7.4 54.0h0.8M19.7 57.1h0.8M25.8 57.1h0.8M26.6 57.1h0.8M7.4 58.7h0.8M15.8 60.2h7.7M23.5 60.2h0.8M15.8 61.8h8.5M24.3 61.8h0.8M18.9 63.3h0.8M22.0 63.3h0.8M23.5 63.3h0.8M27.4 63.3h0.8M31.2 63.3h0.8M33.5 63.3h0.8M38.2 63.3h0.8M40.5 63.3h2.3M19.7 64.9h0.8M24.3 64.9h0.8M27.4 64.9h3.1M32.0 64.9h0.8M34.3 64.9h0.8M35.9 64.9h0.8M38.2 64.9h2.3M24.3 66.4h0.8M34.3 66.4h0.8M7.4 68.0h0.8M25.8 71.1h0.8M32.0 71.1h0.8M32.8 71.1h0.8M7.4 72.6h0.8M15.8 74.2h1.5M17.4 74.2h0.8M18.9 74.2h1.5M20.5 74.2h0.8M22.0 74.2h1.5M23.5 74.2h0.8M25.1 74.2h1.5M26.6 74.2h0.8M28.2 74.2h1.5M29.7 74.2h0.8M31.2 74.2h3.9M35.1 74.2h0.8M36.6 74.2h0.8M37.4 74.2h0.8M38.9 74.2h3.8M42.8 74.2h0.8M12.8 75.7h0.8M22.8 75.7h0.8M12.8 77.3h0.8M14.3 77.3h0.8M23.5 77.3h0.8M12.8 78.8h0.8M22.8 78.8h0.8M12.8 80.4h0.8M14.3 80.4h0.8M23.5 80.4h0.8M12.8 82.0h0.8M22.8 82.0h0.8M15.1 83.5h0.8M23.5 83.5h0.8M12.0 85.1h0.8M15.1 85.1h0.8M16.6 85.1h0.8M18.9 85.1h0.8M25.1 85.1h0.8M27.4 85.1h1.5M15.1 86.6h0.8M18.9 86.6h0.8M22.0 86.6h0.8M25.8 86.6h0.8M28.9 86.6h0.8M32.0 86.6h0.8M35.9 86.6h0.8M37.4 86.6h0.8M41.2 86.6h0.8M44.3 86.6h0.8M45.9 86.6h0.8M48.2 86.6h1.5M50.5 86.6h0.8M54.3 86.6h0.8M55.9 86.6h0.8M59.7 86.6h0.8M62.8 86.6h0.8M64.3 86.6h0.8M66.7 86.6h1.5M69.0 86.6h0.8M72.8 86.6h0.8M74.4 86.6h0.8M12.8 88.2h0.8M15.1 88.2h1.5M18.1 88.2h0.8M26.6 88.2h0.8M29.7 88.2h0.8M31.2 88.2h0.8M32.8 88.2h0.8M38.2 88.2h0.8M21.2 89.7h0.8M30.5 89.7h1.5M32.8 89.7h1.5M7.4 91.3h0.8M21.2 94.4h1.5M7.4 95.9h0.8M17.4 97.5h0.8M26.6 97.5h0.8M28.9 97.5h2.3M32.0 97.5h0.8M35.1 97.5h0.8M39.7 97.5h0.8M42.8 97.5h1.5M45.9 97.5h0.8M48.2 97.5h0.8M49.7 97.5h0.8M59.0 97.5h0.8M61.3 97.5h3.1M7.4 99.0h0.8M20.5 102.1h1.5M7.4 103.7h0.8M17.4 105.3h0.8M22.0 105.3h0.8M25.1 105.3h1.5M28.2 105.3h0.8M30.5 105.3h0.8M32.0 105.3h0.8M41.2 105.3h1.5M44.3 105.3h2.3M47.4 105.3h0.8M50.5 105.3h0.8M59.7 105.3h1.5M62.8 105.3h3.1M7.4 106.8h0.8M4.3 108.4h0.8M1.2 109.9h0.8"/></svg>
<div class="abs" style="left:1130px;top:0;width:1px;height:744px;background:#2e2e2e"></div>
<div class="abs" style="left:1131px;top:0;width:19px;height:744px;background:#1e1e1e"></div>
<div class="abs" style="left:1131px;top:388.8px;width:18.4px;height:2.4px;background:#8e8e8e"></div>
</div><div class="abs" style="left:0;top:0;width:1150px;height:5px;background:linear-gradient(rgba(0,0,0,.5) 0,rgba(0,0,0,.25) 40%,rgba(0,0,0,0) 100%)"></div></div>
<div id="status" class="abs">
<svg class="abs" style="left:15.5px;top:7.5px" width="16" height="16" viewBox="0 0 16 16"><circle cx="8" cy="8" r="7.8" fill="#fff"/><path d="M4.8 4.8 L11.2 11.2 M11.2 4.8 L4.8 11.2" stroke="#007acc" stroke-width="2.2"/></svg>
<span style="left:37.5px">35</span>
<svg class="abs" style="left:61.5px;top:6.5px" width="16.5" height="16.5" viewBox="0 0 16 15" preserveAspectRatio="none"><path d="M8 0.3 L15.8 14.7 H0.2 Z" fill="#fff"/><path d="M8 5 V10.2 M8 11.3 V13.3" stroke="#007acc" stroke-width="2"/></svg>
<span style="left:82.5px">1</span>
<span style="left:113px;letter-spacing:1.6px">--</span><span style="left:130.5px;letter-spacing:-.16px">NORMAL MODE</span><span style="left:252.5px;letter-spacing:1.6px">--</span>
<span style="left:923px">Строка 56, столбец 1</span>
<span style="left:1101px">Пробелов: 4</span>
<span style="left:1212.5px">UTF-8 with BOM</span>
<span style="left:1351.5px;letter-spacing:-.6px">CRLF</span>
<span style="left:1409.5px">C#</span>
<svg class="abs" style="left:1452.6px;top:6.8px" width="13.2" height="17.2" viewBox="0 0 12 16"><path d="M5.05.31c.81 2.17.41 3.38-.52 4.31C3.55 5.67 1.98 6.45.9 7.98c-1.45 2.05-1.7 6.53 3.53 7.7-2.2-1.16-2.67-4.52-.3-6.61-.61 2.03.53 3.33 1.94 2.86 1.39-.47 2.3.53 2.27 1.67-.02.78-.31 1.44-1.13 1.81 3.42-.59 4.78-3.42 4.78-5.56 0-2.84-2.53-3.22-1.25-5.61-1.52.13-2.03 1.13-1.89 2.75.09 1.08-1.02 1.8-1.86 1.33-.67-.41-.66-1.19-.06-1.78C8.18 5.31 8.68 2.45 5.05.32L5.03.3l.02.01z" fill="#fff"/></svg>
<span style="left:1473px">demo.sln</span>
<svg class="abs" style="left:1559px;top:5.5px" width="19" height="19" viewBox="0 0 19 19"><circle cx="9.5" cy="9.5" r="9.3" fill="#fff"/><ellipse cx="6.5" cy="6.6" rx="1.05" ry="1.6" fill="#007acc"/><ellipse cx="12.5" cy="6.6" rx="1.05" ry="1.6" fill="#007acc"/><path d="M4.6 11 Q9.5 17.4 14.4 11" fill="none" stroke="#007acc" stroke-width="1.5" stroke-linecap="round"/></svg>
</div>
</body></html>
